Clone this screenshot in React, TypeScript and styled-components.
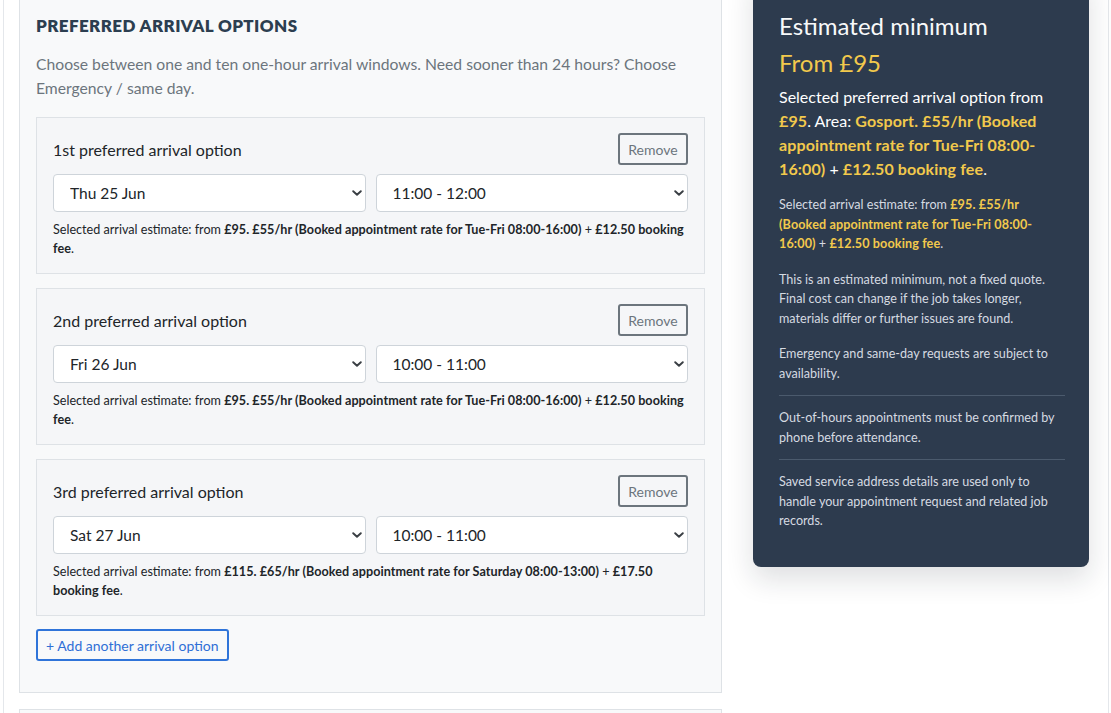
import {FC} from "react";
import styled, {createGlobalStyle} from "styled-components";

type Option = {
    label: string;
    day: string;
    time: string;
    from: string;
    rate: string;
    fee: string;
};

const options: Option[] = [
    {
        label: "1st preferred arrival option",
        day: "Thu 25 Jun",
        time: "11:00 - 12:00",
        from: "£95",
        rate: "£55/hr (Booked appointment rate for Tue-Fri 08:00-16:00)",
        fee: "£12.50 booking fee",
    },
    {
        label: "2nd preferred arrival option",
        day: "Fri 26 Jun",
        time: "10:00 - 11:00",
        from: "£95",
        rate: "£55/hr (Booked appointment rate for Tue-Fri 08:00-16:00)",
        fee: "£12.50 booking fee",
    },
    {
        label: "3rd preferred arrival option",
        day: "Sat 27 Jun",
        time: "10:00 - 11:00",
        from: "£115",
        rate: "£65/hr (Booked appointment rate for Saturday 08:00-13:00)",
        fee: "£17.50 booking fee",
    },
];

const Chevron: FC = () => (
    <ChevronIcon viewBox="0 0 10 6" width={10} height={6}>
        <path d="M1.2 1.2L5 4.8l3.8-3.6" fill="none" stroke="#3a3f44" strokeWidth={1.9} strokeLinecap="round" strokeLinejoin="round" />
    </ChevronIcon>
);

const Select: FC<{value: string}> = ({value}) => (
    <SelectWrap>
        <SelectBox defaultValue={value}>
            <option>{value}</option>
        </SelectBox>
        <Chevron />
    </SelectWrap>
);

const OptionCard: FC<{option: Option}> = ({option}) => (
    <Card>
        <CardHead>
            <CardLabel>{option.label}</CardLabel>
            <RemoveButton type="button">Remove</RemoveButton>
        </CardHead>
        <SelectRow>
            <Select value={option.day} />
            <Select value={option.time} />
        </SelectRow>
        <Estimate>
            Selected arrival estimate: from <b>{option.from}. {option.rate}</b> + <b>{option.fee}</b>.
        </Estimate>
    </Card>
);

export default function App() {
    return (
        <>
            <GlobalStyle />
            <Shell>
                <Grid>
                    <div>
                        <Panel>
                            <Heading>Preferred arrival options</Heading>
                            <Intro>
                                Choose between one and ten one-hour arrival windows. Need sooner than 24 hours? Choose
                                Emergency / same day.
                            </Intro>
                            {options.map((option) => (
                                <OptionCard key={option.label} option={option} />
                            ))}
                            <AddButton type="button">+ Add another arrival option</AddButton>
                        </Panel>
                        <NextPanel />
                    </div>
                    <Summary>
                        <SummaryTitle>Estimated minimum</SummaryTitle>
                        <SummaryPrice>From £95</SummaryPrice>
                        <SummaryLead>
                            Selected preferred arrival option from <Hi>£95</Hi>. Area:{" "}
                            <Hi>Gosport. £55/hr (Booked appointment rate for Tue-Fri 08:00-16:00)</Hi> +{" "}
                            <Hi>£12.50 booking fee</Hi>.
                        </SummaryLead>
                        <Note $top={14}>
                            Selected arrival estimate: from{" "}
                            <Hi>£95. £55/hr (Booked appointment rate for Tue-Fri 08:00-16:00)</Hi> +{" "}
                            <Hi>£12.50 booking fee</Hi>.
                        </Note>
                        <Note $top={16}>
                            This is an estimated minimum, not a fixed quote. Final cost can change if the job takes
                            longer, materials differ or further issues are found.
                        </Note>
                        <Note $top={16}>Emergency and same-day requests are subject to availability.</Note>
                        <Divided>Out-of-hours appointments must be confirmed by phone before attendance.</Divided>
                        <Divided>
                            Saved service address details are used only to handle your appointment request and related
                            job records.
                        </Divided>
                    </Summary>
                </Grid>
            </Shell>
        </>
    );
}

const GlobalStyle = createGlobalStyle`
    html, body {
        margin: 0;
        background: #ffffff;
        overflow: hidden;
    }
    body {
        font-family: Lato, "Open Sans", sans-serif;
        color: #212529;
    }
    * {
        box-sizing: border-box;
    }
`;

const Shell = styled.div`
    margin: -27px 2px 0 3px;
    border-left: 1px solid #e4e7eb;
    border-right: 1px solid #e4e7eb;
    padding: 0 18px 0 15px;
    min-height: 760px;
`;

const Grid = styled.div`
    display: grid;
    grid-template-columns: 703px 336px;
    column-gap: 31px;
    align-items: start;
`;

const Panel = styled.section`
    background: #f8f9fa;
    border: 1px solid #dee2e6;
    padding: 42px 16px 31px;
`;

const NextPanel = styled.section`
    margin-top: 16px;
    height: 60px;
    background: #f8f9fa;
    border: 1px solid #dee2e6;
`;

const Heading = styled.h2`
    margin: 0;
    font-size: 17px;
    line-height: 20px;
    font-weight: 800;
    text-transform: uppercase;
    color: #2c3e50;
    letter-spacing: 0.4px;
`;

const Intro = styled.p`
    margin: 16px 0 17px;
    font-size: 15.7px;
    line-height: 24px;
    color: #6c757d;
`;

const Card = styled.div`
    background: #f5f6f8;
    border: 1px solid #dee2e6;
    padding: 15px 16px;
    margin-bottom: 14px;
`;

const CardHead = styled.div`
    display: flex;
    justify-content: space-between;
    align-items: center;
    height: 32px;
`;

const CardLabel = styled.div`
    font-size: 16px;
    color: #212529;
`;

const RemoveButton = styled.button`
    height: 32px;
    width: 70px;
    padding: 0;
    background: transparent;
    border: 2px solid #6c757d;
    border-radius: 3px;
    color: #6c757d;
    font-family: Lato, sans-serif;
    font-size: 14px;
`;

const SelectRow = styled.div`
    display: grid;
    grid-template-columns: 1fr 1fr;
    column-gap: 10px;
    margin-top: 9px;
`;

const SelectWrap = styled.div`
    position: relative;
`;

const SelectBox = styled.select`
    appearance: none;
    width: 100%;
    height: 38px;
    padding: 0 24px 0 16px;
    border: 1px solid #ced4da;
    border-radius: 4px;
    background: #ffffff;
    font-family: Lato, sans-serif;
    font-size: 15.5px;
    color: #212529;
`;

const ChevronIcon = styled.svg`
    position: absolute;
    top: 16px;
    right: 4px;
    pointer-events: none;
`;

const Estimate = styled.p`
    margin: 8px 0 0;
    font-size: 12.6px;
    line-height: 19px;
    color: #212529;

    b {
        font-weight: 700;
        letter-spacing: 0.05px;
    }
`;

const AddButton = styled.button`
    display: block;
    height: 32px;
    padding: 0 8px;
    margin-top: -1px;
    background: transparent;
    border: 2px solid #2f74d9;
    border-radius: 3px;
    color: #2f6fd6;
    font-family: Lato, sans-serif;
    font-size: 14px;
`;

const Summary = styled.aside`
    background: #2d3b4e;
    border-radius: 0 0 8px 8px;
    padding: 38px 24px 36px 26px;
    box-shadow: 0 12px 28px rgba(20, 30, 45, 0.14);
    color: #f8f9fa;
`;

const SummaryTitle = styled.h3`
    margin: 0;
    font-size: 24px;
    line-height: 30px;
    font-weight: 400;
    color: #f8f9fa;
`;

const SummaryPrice = styled.div`
    margin-top: 7px;
    font-size: 24px;
    line-height: 30px;
    color: #f2c94c;
`;

const SummaryLead = styled.p`
    margin: 7px 0 0;
    font-size: 16px;
    line-height: 24px;
    color: #ffffff;
`;

const Hi = styled.b`
    color: #f2c94c;
    font-weight: 700;
    letter-spacing: 0.12px;
`;

const Note = styled.p<{$top: number}>`
    margin: ${(p) => p.$top}px 0 0;
    font-size: 12.6px;
    line-height: 19.5px;
    color: #d5dae1;
`;

const Divided = styled.p`
    margin: 12px 0 0;
    padding-top: 12px;
    border-top: 1px solid #4b5a6d;
    font-size: 12.6px;
    line-height: 19.5px;
    color: #d5dae1;
`;
